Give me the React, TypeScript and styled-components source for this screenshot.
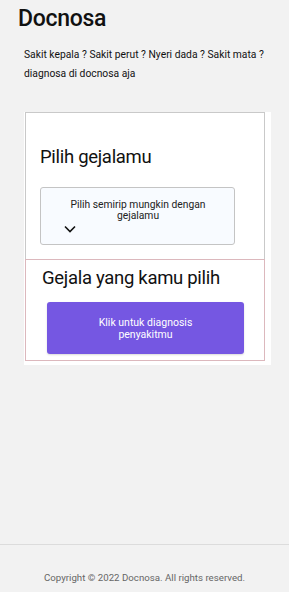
import React from "react";
import styled, { createGlobalStyle } from "styled-components";

const Global = createGlobalStyle`
  html, body { margin: 0; padding: 0; background: #f2f2f2; }
  body { font-family: Roboto, "Noto Sans", sans-serif; color: #111; }
  #root { min-height: 592px; }
`;

const Page = styled.div`
  display: flex;
  flex-direction: column;
  min-height: 592px;
  background: #f2f2f2;
`;

const Main = styled.main`
  flex: 1;
  display: flex;
  flex-direction: column;
`;

const Title = styled.h1`
  margin: 0;
  padding: 5px 0 0 18px;
  font-size: 23px;
  letter-spacing: -0.3px;
  font-weight: 500;
  line-height: 28px;
  color: #111;
`;

const Lead = styled.p`
  margin: 12px 0 0 24px;
  width: 250px;
  font-size: 10.3px;
  line-height: 19px;
  color: #111;
`;

const Sheet = styled.section`
  margin: 29px 18px 0 24px;
  background: #fff;
  padding: 0 6px 4px 1px;
  display: flex;
  flex-direction: column;
`;

const PickCard = styled.div`
  border: 1px solid #c9c9c9;
  border-bottom: none;
  padding: 33px 29px 14px 14px;
  display: flex;
  flex-direction: column;
`;

const CardTitle = styled.h2`
  margin: 0;
  font-size: 18.5px;
  letter-spacing: -0.3px;
  font-weight: 400;
  line-height: 22px;
  color: #111;
`;

const Dropdown = styled.button`
  margin-top: 19px;
  height: 58px;
  box-sizing: border-box;
  border: 1px solid #c4c4c4;
  border-radius: 3px;
  background: #f8fbff;
  padding: 11px 22px 0 23px;
  font-family: inherit;
  display: flex;
  flex-direction: column;
  align-items: stretch;
  cursor: pointer;
`;

const DropText = styled.span`
  font-size: 10.3px;
  line-height: 11px;
  color: #222;
  text-align: center;
`;

const Chevron = styled.svg`
  margin-top: 4px;
  width: 12px;
  height: 8px;
`;

const ChosenCard = styled.div`
  border: 1px solid #dcb8bd;
  padding: 7px 20px 6px 16px;
  display: flex;
  flex-direction: column;
`;

const ChosenTitle = styled.h2`
  margin: 0;
  font-size: 18.5px;
  letter-spacing: -0.3px;
  font-weight: 400;
  line-height: 23px;
  color: #111;
`;

const Diagnose = styled.button`
  margin: 12px 0 0 5px;
  height: 52px;
  border: none;
  border-radius: 3px;
  background: #7557e2;
  color: #fff;
  font-family: inherit;
  font-size: 10.5px;
  line-height: 12px;
  padding: 1px 40px 0;
  box-shadow: 0 1px 2px rgba(0, 0, 0, 0.15);
  cursor: pointer;
`;

const Footer = styled.footer`
  border-top: 1px solid #dcdcdc;
  height: 47px;
  display: flex;
  align-items: center;
  justify-content: center;
  font-size: 9.7px;
  color: #666;
`;

const FooterText = styled.span`
  margin-top: 18px;
`;

export default function App() {
  return (
    <Page>
      <Global />
      <Main>
        <Title>Docnosa</Title>
        <Lead>
          Sakit kepala ? Sakit perut ? Nyeri dada ? Sakit mata ? diagnosa di docnosa aja
        </Lead>
        <Sheet>
          <PickCard>
            <CardTitle>Pilih gejalamu</CardTitle>
            <Dropdown type="button">
              <DropText>Pilih semirip mungkin dengan gejalamu</DropText>
              <Chevron viewBox="0 0 12 8" fill="none">
                <path d="M1 1.5l5 5 5-5" stroke="#111" strokeWidth="1.6" />
              </Chevron>
            </Dropdown>
          </PickCard>
          <ChosenCard>
            <ChosenTitle>Gejala yang kamu pilih</ChosenTitle>
            <Diagnose type="button">Klik untuk diagnosis penyakitmu</Diagnose>
          </ChosenCard>
        </Sheet>
      </Main>
      <Footer>
        <FooterText>Copyright © 2022 Docnosa. All rights reserved.</FooterText>
      </Footer>
    </Page>
  );
}
